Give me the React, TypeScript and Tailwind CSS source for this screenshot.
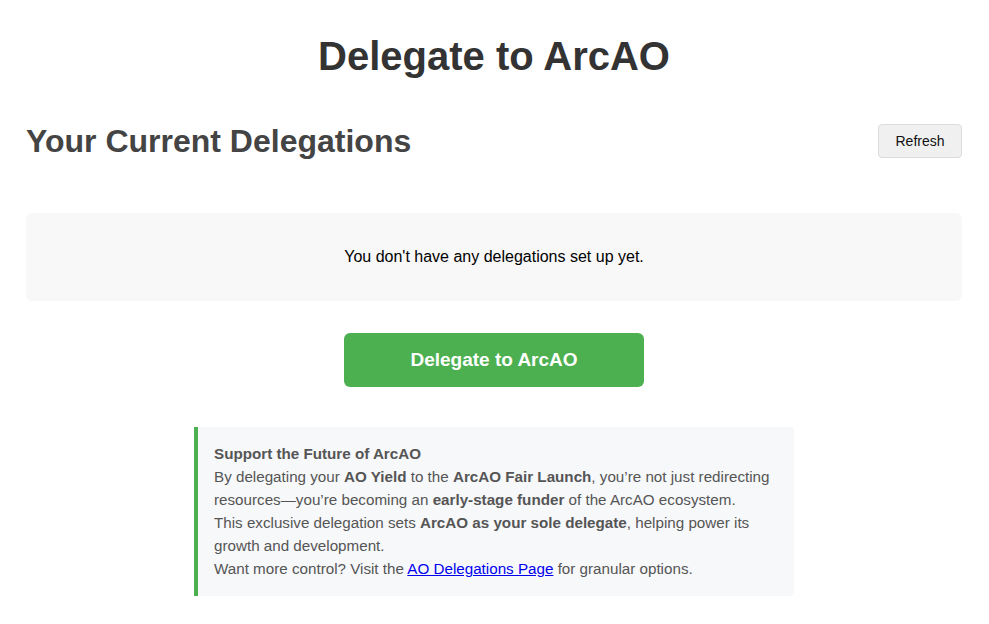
import React from 'react';

const App: React.FC = () => {
  return (
    <div className="min-h-screen bg-white pl-[26px] pr-[27px] font-['Liberation_Sans',Arial,sans-serif]">
      <h1 className="pt-[33px] text-center text-[40px] font-bold leading-[46px] text-[#333]">
        Delegate to ArcAO
      </h1>

      <div className="mt-[43px] flex items-center justify-between">
        <h2 className="text-[32px] font-bold leading-[38px] text-[#444]">Your Current Delegations</h2>
        <button className="h-[34px] w-[84px] rounded-[4px] border border-[#dcdcdc] bg-[#f0f0f0] text-[14px] text-[#111]">
          Refresh
        </button>
      </div>

      <div className="mt-[53px] flex h-[88px] items-center justify-center rounded-[6px] bg-[#f8f8f8] text-[16px] text-black">
        You don't have any delegations set up yet.
      </div>

      <div className="mt-[32px] flex justify-center">
        <button className="h-[54px] w-[300px] rounded-[6px] bg-[#4caf50] text-[19px] font-bold text-white">
          Delegate to ArcAO
        </button>
      </div>

      <div className="mt-[40px] flex justify-center">
        <div className="w-[600px] rounded-r-[4px] border-l-4 border-[#4caf50] bg-[#f7f8fa] pb-[16px] pt-[15px] pl-[16px] pr-[14px] text-[15.2px] leading-[23px] text-[#555]">
          <div className="font-bold">Support the Future of ArcAO</div>
          <div>
            By delegating your <b>AO Yield</b> to the <b>ArcAO Fair Launch</b>, you’re not just redirecting
            resources—you’re becoming an <b>early-stage funder</b> of the ArcAO ecosystem.
          </div>
          <div>
            This exclusive delegation sets <b>ArcAO as your sole delegate</b>, helping power its growth and
            development.
          </div>
          <div>
            Want more control? Visit the{' '}
            <a href="#" className="text-[#0000ee] underline">
              AO Delegations Page
            </a>{' '}
            for granular options.
          </div>
        </div>
      </div>
    </div>
  );
};

export default App;
